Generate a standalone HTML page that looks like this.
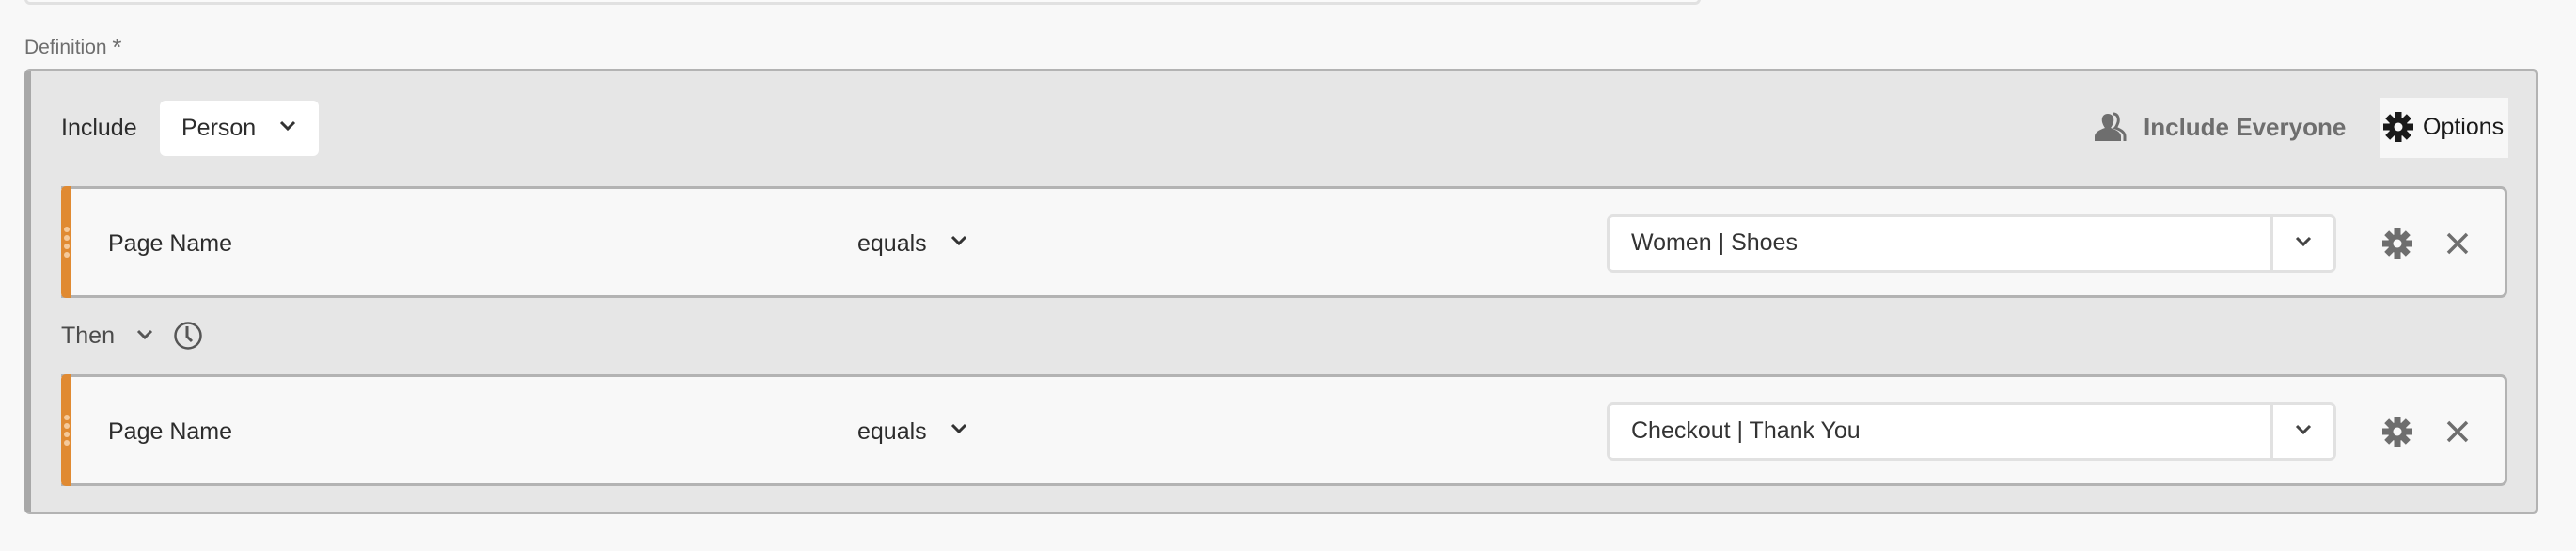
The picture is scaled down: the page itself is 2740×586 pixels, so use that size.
<!DOCTYPE html>
<html><head><meta charset="utf-8"><style>
*{box-sizing:border-box;margin:0;padding:0}
body{width:2740px;height:586px;background:#f8f8f8;font-family:"Liberation Sans",sans-serif;position:relative;overflow:hidden;color:#2c2c2c}
.a{position:absolute}
.topinp{left:26px;top:-10px;width:1783px;height:15px;border:3px solid #e1e1e1;border-top:none;border-radius:0 0 6px 6px;background:#fafafa}
.def{left:26px;top:33px;font-size:21px;color:#6e6e6e}
.box{left:26px;top:73px;width:2674px;height:474px;background:#e6e6e6;border:3px solid #b3b3b3;border-left:7px solid #a8a8a8;border-radius:6px}
.t{font-size:25px;color:#2c2c2c;line-height:30px}
.btn{left:170px;top:107px;width:169px;height:59px;background:#fff;border-radius:6px}
.row{left:65px;width:2602px;height:119px;background:#f8f8f8;border:3px solid #b3b3b3;border-left:none;border-radius:0 7px 7px 0}
.bar{left:0;top:-3px;width:11px;height:119px;background:#e08a32;border-radius:5px 0 0 5px}
.dots{left:3px;width:6px}
.dots i{display:block;width:6px;height:6px;border-radius:3px;background:#f5c99a;margin-bottom:3px}
.inp{left:1644px;top:27px;width:776px;height:62px;background:#fff;border:3px solid #e1e1e1;border-radius:7px}
.inp .dv{left:703px;top:-3px;width:3px;height:62px;background:#e1e1e1}
</style></head><body>
<div class="a topinp"></div>
<div class="a def">Definition <span style="font-size:26px;position:relative;top:2px">*</span></div>
<div class="a box"></div>
<div class="a t" style="left:65px;top:121px">Include</div>
<div class="a btn"></div>
<div class="a t" style="left:193px;top:121px">Person</div>
<svg class="a" style="left:296px;top:127px" width="20" height="14" viewBox="0 0 20 14"><path d="M3 3l7 7 7-7" fill="none" stroke="#333" stroke-width="3"/></svg>

<svg class="a" style="left:2227px;top:119px" width="38" height="32" viewBox="0 0 38 32"><path d="M15 2c-5 0-7 4-6 9 1 3 2 5 3 6-6 2-11 5-11 9v5h28v-5c0-4-5-7-11-9 1-1 2-3 3-6 1-5-1-9-6-9z" fill="#6e6e6e"/><path d="M21 2c4 0 6 4 5 9-1 3-2 5-3 6 6 2 10 5 10 9v5" fill="none" stroke="#6e6e6e" stroke-width="3"/></svg>
<div class="a" style="left:2280px;top:120px;font-size:26px;font-weight:bold;color:#6e6e6e">Include Everyone</div>
<div class="a" style="left:2531px;top:104px;width:137px;height:64px;background:#f7f7f7"></div>
<svg class="a" style="left:2535px;top:119px" width="32" height="32" viewBox="-16 -16 32 32"><g fill="#1a1a1a"><circle r="10"/><rect x="-3.5" y="-16" width="7" height="32"/><rect x="-3.5" y="-16" width="7" height="32" transform="rotate(45)"/><rect x="-3.5" y="-16" width="7" height="32" transform="rotate(90)"/><rect x="-3.5" y="-16" width="7" height="32" transform="rotate(135)"/></g><circle r="4.5" fill="#f7f7f7"/></svg>
<div class="a" style="left:2577px;top:121px;font-size:25px;color:#1a1a1a">Options</div>

<div class="a row" style="top:198px">
 <div class="a bar"></div>
 <div class="a dots" style="top:40px"><i></i><i></i><i></i><i></i></div>
 <div class="a t" style="left:50px;top:43px">Page Name</div>
 <div class="a t" style="left:847px;top:43px">equals</div>
 <svg class="a" style="left:945px;top:48px" width="20" height="14" viewBox="0 0 20 14"><path d="M3 3l7 7 7-7" fill="none" stroke="#333" stroke-width="3"/></svg>
 <div class="a inp"><div class="a dv"></div><div class="a t" style="left:23px;top:12px;color:#333">Women | Shoes</div>
  <svg class="a" style="left:728px;top:19px" width="20" height="14" viewBox="0 0 20 14"><path d="M3 3l7 7 7-7" fill="none" stroke="#444" stroke-width="3"/></svg></div>
 <svg class="a" style="left:2469px;top:42px" width="32" height="32" viewBox="-16 -16 32 32"><g fill="#6e6e6e"><circle r="10"/><rect x="-3.5" y="-16" width="7" height="32"/><rect x="-3.5" y="-16" width="7" height="32" transform="rotate(45)"/><rect x="-3.5" y="-16" width="7" height="32" transform="rotate(90)"/><rect x="-3.5" y="-16" width="7" height="32" transform="rotate(135)"/></g><circle r="4.5" fill="#f8f8f8"/></svg>
 <svg class="a" style="left:2536px;top:45px" width="26" height="26" viewBox="0 0 26 26"><path d="M3 3l20 20M23 3L3 23" stroke="#6e6e6e" stroke-width="3.5"/></svg>
</div>

<div class="a t" style="left:65px;top:342px;color:#4b4b4b">Then</div>
<svg class="a" style="left:144px;top:349px" width="20" height="14" viewBox="0 0 20 14"><path d="M3 3l7 7 7-7" fill="none" stroke="#555" stroke-width="3"/></svg>
<svg class="a" style="left:184px;top:341px" width="32" height="32" viewBox="0 0 32 32"><circle cx="16" cy="16" r="13.5" fill="none" stroke="#555" stroke-width="2.5"/><path d="M15 6v11l5 5" fill="none" stroke="#555" stroke-width="3"/></svg>

<div class="a row" style="top:398px">
 <div class="a bar"></div>
 <div class="a dots" style="top:40px"><i></i><i></i><i></i><i></i></div>
 <div class="a t" style="left:50px;top:43px">Page Name</div>
 <div class="a t" style="left:847px;top:43px">equals</div>
 <svg class="a" style="left:945px;top:48px" width="20" height="14" viewBox="0 0 20 14"><path d="M3 3l7 7 7-7" fill="none" stroke="#333" stroke-width="3"/></svg>
 <div class="a inp"><div class="a dv"></div><div class="a t" style="left:23px;top:12px;color:#333">Checkout | Thank You</div>
  <svg class="a" style="left:728px;top:19px" width="20" height="14" viewBox="0 0 20 14"><path d="M3 3l7 7 7-7" fill="none" stroke="#444" stroke-width="3"/></svg></div>
 <svg class="a" style="left:2469px;top:42px" width="32" height="32" viewBox="-16 -16 32 32"><g fill="#6e6e6e"><circle r="10"/><rect x="-3.5" y="-16" width="7" height="32"/><rect x="-3.5" y="-16" width="7" height="32" transform="rotate(45)"/><rect x="-3.5" y="-16" width="7" height="32" transform="rotate(90)"/><rect x="-3.5" y="-16" width="7" height="32" transform="rotate(135)"/></g><circle r="4.5" fill="#f8f8f8"/></svg>
 <svg class="a" style="left:2536px;top:45px" width="26" height="26" viewBox="0 0 26 26"><path d="M3 3l20 20M23 3L3 23" stroke="#6e6e6e" stroke-width="3.5"/></svg>
</div>
</body></html>
